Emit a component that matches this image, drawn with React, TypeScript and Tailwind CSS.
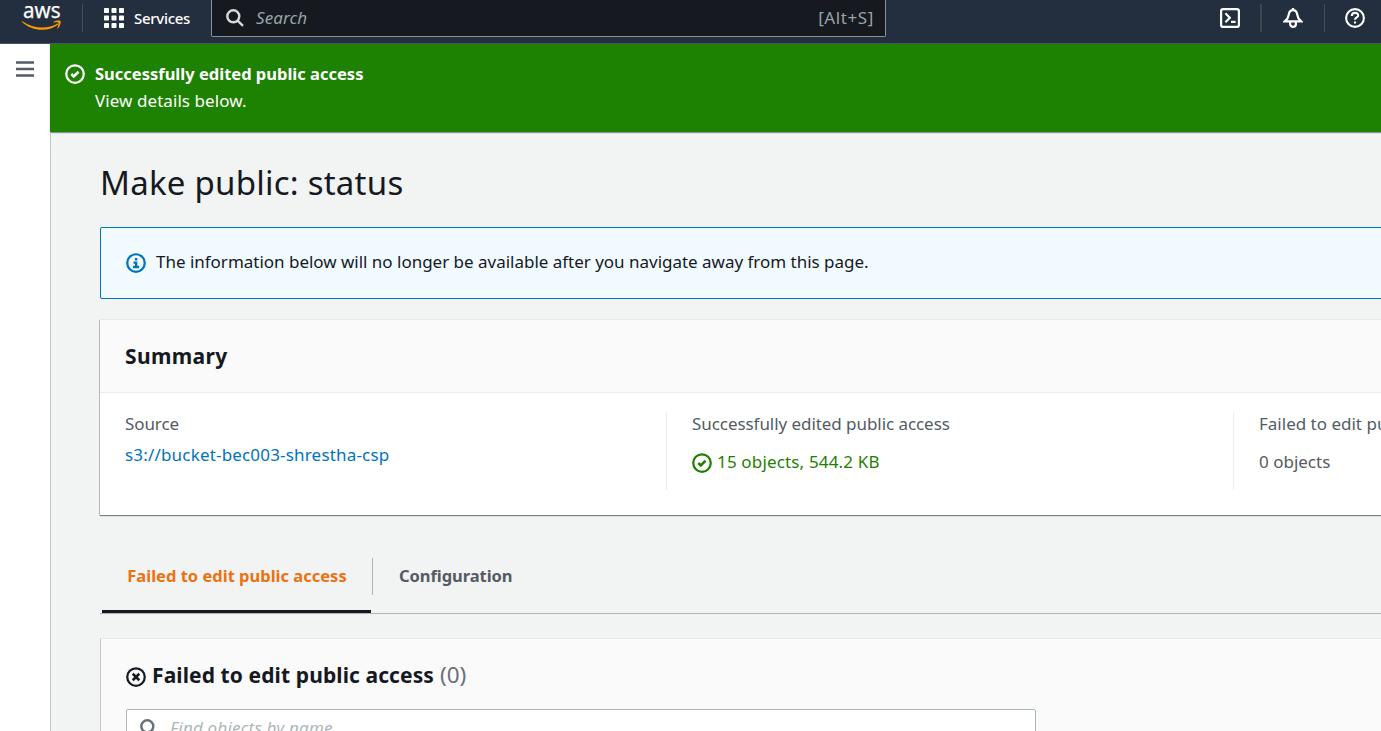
import React from "react";

type IconProps = { className?: string };

const StatusCheck = ({ className }: IconProps) => (
  <svg viewBox="0 0 16 16" width="20" height="20" fill="none" stroke="currentColor" strokeWidth="2" className={className}>
    <circle cx="8" cy="8" r="7" strokeWidth="1.8" />
    <path d="M5 8l2 2 3.8-3.8" strokeWidth="2" />
  </svg>
);

const StatusInfo = ({ className }: IconProps) => (
  <svg viewBox="0 0 16 16" width="20" height="20" fill="none" stroke="currentColor" className={className}>
    <circle cx="8" cy="8" r="7" strokeWidth="1.8" />
    <path d="M8.1 12V7.7H6M5.6 11.2h4.9M8.1 6V4" strokeWidth="1.9" />
  </svg>
);

const StatusError = ({ className }: IconProps) => (
  <svg viewBox="0 0 16 16" width="20" height="20" fill="none" stroke="currentColor" strokeWidth="1.8" className={className}>
    <circle cx="8" cy="8" r="7" />
    <path d="M5.4 5.4l5.2 5.2M10.6 5.4l-5.2 5.2" strokeWidth="2" />
  </svg>
);

const SearchIcon = ({ className }: IconProps) => (
  <svg viewBox="0 0 18 18" width="18" height="18" fill="none" stroke="currentColor" strokeWidth="2.4" className={className}>
    <circle cx="7.3" cy="7.3" r="6" />
    <path d="M11.6 11.6l5.4 5.2" />
  </svg>
);

const Divider = () => <span className="h-7 w-px shrink-0 bg-[#414d5c]" />;

function Header() {
  return (
    <header className="flex h-11 shrink-0 items-start border-b border-[#4c5766] bg-[#232f3e] text-white">
      <div className="ml-[21px] h-9 w-[42px]">
        <svg viewBox="0 0 42 36" width="42" height="36" overflow="visible">
          <text x="2" y="17.8" textLength="37.5" lengthAdjust="spacingAndGlyphs" fontFamily="Noto Sans, sans-serif" fontSize="22" fontWeight="400" fill="#fff" stroke="#fff" strokeWidth="0.25">aws</text>
          <path d="M1.2 21.2c11 7.6 25.6 8.2 35.5 2.3.8-.3 1.2.5.5 1.1-9.2 7.5-26.5 7.2-36.3-2.8-.4-.5 0-.9.3-.6z" fill="#ff9900" />
          <path d="M32.3 21.9c3-1.7 6.5-1.7 7.2-1 .6.8-.1 5.2-2.7 7.4-.4.3-.8.2-.6-.3.7-1.6 1.9-4.6 1.3-5.3-.6-.7-3.4-.5-4.9-.3-.5.1-.6-.2-.3-.5z" fill="#ff9900" />
        </svg>
      </div>
      <div className="ml-[19px] mt-1 flex h-7 items-center">
        <Divider />
        <svg viewBox="0 0 20 20" width="20" height="20" fill="currentColor" className="ml-[21px]">
          {[0, 7.5, 15].map((y) => [0, 7.5, 15].map((x) => <rect key={`${x}-${y}`} x={x} y={y} width="5" height="5" rx="0.8" />))}
        </svg>
        <span className="ml-2.5 w-[56px] text-[15px] font-medium tracking-[-0.3px]">Services</span>
      </div>
      <div className="ml-[21px] flex h-[37px] w-[675px] items-center rounded-b-[2px] border border-t-0 border-[#879596] bg-[#16191f] pl-[14px] pr-[11px] text-[17px]">
        <SearchIcon className="text-[#d5dbdb]" />
        <span className="-mt-0.5 ml-3 italic tracking-[0.1px] text-[#95a5a6]">Search</span>
        <span className="-mt-0.5 ml-auto tracking-[0.6px] text-[#95a5a6]">[Alt+S]</span>
      </div>
      <div className="ml-auto mt-1 flex h-7 items-center pr-4">
        <svg viewBox="0 0 20 20" width="20" height="20" fill="none" stroke="currentColor" strokeWidth="2.2">
          <rect x="1.1" y="1.1" width="17.8" height="17.8" rx="2" />
          <path d="M5.4 5.3l4.4 4.5-4.4 4.5M11 13.9h4.6" />
        </svg>
        <span className="ml-5 h-7 w-0.5 bg-[#414750]" />
        <svg viewBox="0 0 20 20" width="20" height="20" fill="none" stroke="currentColor" strokeWidth="2.2" className="ml-[21px] mr-[21px]">
          <path d="M10 2.2c-2.8 0-4 2-4.3 4.600-.3 3.300-1.500 4.400-3.900 6.600h16.400c-2.400-2.200-3.600-3.300-3.900-6.600-.3-2.600-1.500-4.600-4.300-4.600zM10 0v2.200M7.100 14v2a2.900 2.900 0 0 0 5.800 0v-2" />
        </svg>
        <Divider />
        <svg viewBox="0 0 20 20" width="20" height="20" fill="none" stroke="currentColor" strokeWidth="2.1" className="ml-5">
          <circle cx="10" cy="10" r="8.900" />
          <path d="M6.800 8c0-4.200 6.400-4 6.400-.6 0 2.100-3.200 2.100-3.200 4.400M10 13.400v2.200" />
        </svg>
      </div>
    </header>
  );
}

export default function App() {
  return (
    <div className="flex h-[731px] w-[1381px] flex-col overflow-hidden bg-[#f2f3f3] font-['Noto_Sans',sans-serif] text-[17px] leading-[27px] text-[#16191f]">
      <Header />
      <div className="flex min-h-0 flex-1">
        <nav className="w-[50px] shrink-0 bg-white pl-4 pt-[17px]">
          <svg viewBox="0 0 18 16" width="18" height="16" stroke="#545b64" strokeWidth="2.4">
            <path d="M0 1.5h18M0 8h18M0 14.5h18" />
          </svg>
        </nav>
        <div className="min-w-0 flex-1">
          <div className="flex h-[88px] bg-[#1d8102] pl-[15px] pt-4 text-white shadow-[0_1px_1px_#8b8f9a]">
            <StatusCheck className="mt-1" />
            <div className="ml-2.5 whitespace-nowrap">
              <div className="text-[16.5px] font-bold">Successfully edited public access</div>
              <div className="tracking-[0.07px]">View details below.</div>
            </div>
          </div>
          <main className="h-[600px] border-l border-[#c3c9cb] pl-[49px] pt-[29px]">
            <h1 className="h-[44px] text-[33px] leading-[44px] tracking-[0.24px]">Make public: status</h1>
            <div className="mt-[22px] flex h-[72px] w-[1400px] items-center rounded-[2px] border border-[#0073bb] bg-[#f1faff] pl-[25px]">
              <StatusInfo className="text-[#0073bb]" />
              <span className="-mt-[3px] ml-2.5 whitespace-nowrap tracking-[-0.015px]">The information below will no longer be available after you navigate away from this page.</span>
            </div>
            <section className="mt-[21px] h-[195px] w-[1600px] bg-white shadow-[0_1px_1px_0_rgba(0,28,36,0.5),0_0_0_1px_rgba(0,28,36,0.05),-1px_0_0_rgba(0,28,36,0.15)]">
              <div className="flex h-[73px] items-center border-b border-[#eaeded] bg-[#fafafa] pl-[25px]">
                <h2 className="text-[21px] font-bold tracking-[0.35px]">Summary</h2>
              </div>
              <div className="flex whitespace-nowrap pt-[19px]">
                <div className="h-[78px] w-[566px] pl-[25px]">
                  <div className="leading-[24px] tracking-[-0.1px] text-[#545b64]">Source</div>
                  <div className="mt-[7px] leading-[24px] tracking-[0.18px] text-[#0073bb]">s3://bucket-bec003-shrestha-csp</div>
                </div>
                <div className="h-[78px] w-[567px] border-l border-[#eaeded] pl-[25px]">
                  <div className="leading-[24px] tracking-[-0.06px] text-[#545b64]">Successfully edited public access</div>
                  <div className="mt-[14px] flex items-center leading-[24px] text-[#1d8102]">
                    <StatusCheck className="mt-0.5" />
                    <span className="ml-[5px] tracking-[0.16px]">15 objects, 544.2 KB</span>
                  </div>
                </div>
                <div className="h-[78px] border-l border-[#eaeded] pl-[25px] text-[#545b64]">
                  <div className="leading-[24px]">Failed to edit public access</div>
                  <div className="mt-[14px] leading-[24px]">0 objects</div>
                </div>
              </div>
            </section>
            <div className="mt-[42px] flex h-[57px] items-start border-b border-[#aab7b8] text-[16.5px] font-bold">
              <div className="ml-[2px] flex h-[56px] w-[269px] justify-center whitespace-nowrap border-b-[3px] border-[#16191f] pl-px pt-[5px] text-[#ec7211]">Failed to edit public access</div>
              <span className="ml-px mt-px h-[37px] w-px bg-[#aab7b8]" />
              <div className="ml-[26px] pt-[5px] tracking-[-0.05px] text-[#545b64]">Configuration</div>
            </div>
            <section className="mt-[24px] h-[200px] w-[1600px] border-l border-t border-l-[#c4cacb] border-t-[#e6eaea] bg-[#fafafa] pl-[25px] pt-[22px]">
              <div className="flex h-7 items-center whitespace-nowrap">
                <StatusError className="mt-[3px]" />
                <h2 className="ml-[6px] text-[21px] font-bold tracking-[0.1px]">Failed to edit public access</h2>
                <span className="-mt-0.5 ml-[6px] text-[22.5px] text-[#687078]">(0)</span>
              </div>
              <div className="mt-5 flex h-[40px] w-[910px] rounded-[2px] border border-[#aab7b8] bg-white pl-[13px] pt-[9px]">
                <SearchIcon className="text-[#687078]" />
                <span className="ml-3 italic leading-[18px] tracking-[0.2px] text-[#aab7b8]">Find objects by name</span>
              </div>
            </section>
          </main>
        </div>
      </div>
    </div>
  );
}
